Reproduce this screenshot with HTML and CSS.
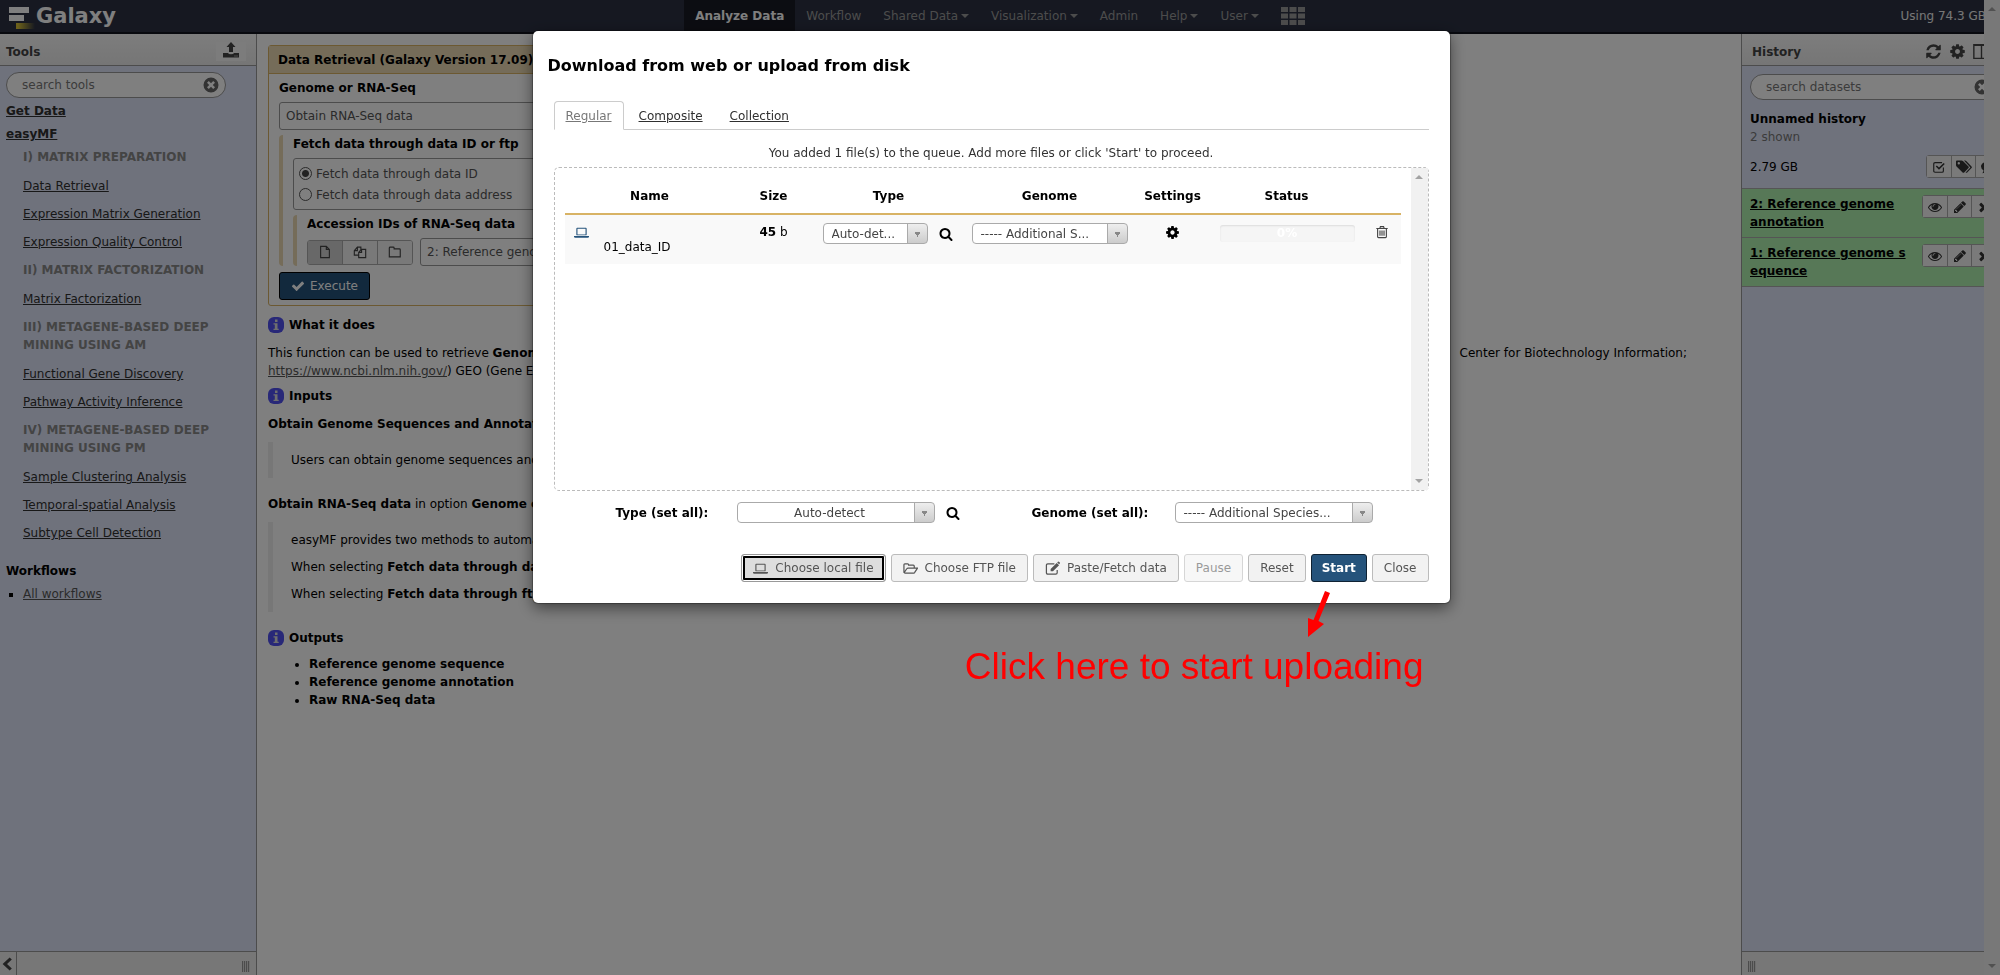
FILE: index.html
```html
<!DOCTYPE html>
<html lang="en">
<head>
<meta charset="utf-8">
<title>Galaxy</title>
<link rel="stylesheet" href="styles.css">
</head>
<body>
<svg class="sprite" aria-hidden="true">
  <symbol id="search" viewBox="0 0 1792 1792"><path d="M1216 832q0-185-131.500-316.500t-316.500-131.500-316.500 131.500-131.500 316.500 131.500 316.500 316.500 131.500 316.500-131.500 131.500-316.500zm512 832q0 52-38 90t-90 38q-54 0-90-38l-343-342q-179 124-399 124-143 0-273.500-55.500t-225-150-150-225-55.500-273.500 55.500-273.500 150-225 225-150 273.500-55.500 273.500 55.500 225 150 150 225 55.500 273.500q0 220-124 399l343 343q37 37 37 90z"/></symbol>
  <symbol id="cog" viewBox="0 0 1792 1792"><path d="M1152 896q0-106-75-181t-181-75-181 75-75 181 75 181 181 75 181-75 75-181zm512-109v222q0 12-8 23t-20 13l-185 28q-19 54-39 91 35 50 107 138 10 12 10 25t-9 23q-27 37-99 108t-94 71q-12 0-26-9l-138-108q-44 23-91 38-16 136-29 186-7 28-36 28h-222q-14 0-24.500-8.500t-11.500-21.500l-28-184q-49-16-90-37l-141 107q-10 9-25 9-14 0-25-11-126-114-165-168-7-10-7-23 0-12 8-23 15-21 51-66.500t54-70.500q-27-50-41-99l-183-27q-13-2-21-12.500t-8-23.500v-222q0-12 8-23t19-13l186-28q14-46 39-92-40-57-107-138-10-12-10-24 0-10 9-23 26-36 98.500-107.500t94.500-71.500q13 0 26 10l138 107q44-23 91-38 16-136 29-186 7-28 36-28h222q14 0 24.500 8.500t11.500 21.500l28 184q49 16 90 37l142-107q9-9 24-9 13 0 25 10 129 119 165 170 7 8 7 22 0 12-8 23-15 21-51 66.500t-54 70.500q26 50 41 98l183 28q13 2 21 12.500t8 23.500z"/></symbol>
  <symbol id="check" viewBox="0 0 1792 1792"><path d="M1671 566q0 40-28 68l-724 724-136 136q-28 28-68 28t-68-28l-136-136-362-362q-28-28-28-68t28-68l136-136q28-28 68-28t68 28l294 295 656-657q28-28 68-28t68 28l136 136q28 28 28 68z"/></symbol>
  <symbol id="times" viewBox="0 0 1792 1792"><path d="M1490 1322q0 40-28 68l-136 136q-28 28-68 28t-68-28l-294-294-294 294q-28 28-68 28t-68-28l-136-136q-28-28-28-68t28-68l294-294-294-294q-28-28-28-68t28-68l136-136q28-28 68-28t68 28l294 294 294-294q28-28 68-28t68 28l136 136q28 28 28 68t-28 68l-294 294 294 294q28 28 28 68z"/></symbol>
  <symbol id="refresh" viewBox="0 0 1792 1792"><path d="M1639 1056q0 5-1 7-64 268-268 434.500t-478 166.500q-146 0-282.500-55t-243.500-157l-129 129q-19 19-45 19t-45-19-19-45v-448q0-26 19-45t45-19h448q26 0 45 19t19 45-19 45l-137 137q71 66 161 102t187 36q134 0 250-65t186-179q11-17 53-117 8-23 30-23h192q13 0 22.500 9.500t9.500 22.500zm25-800v448q0 26-19 45t-45 19h-448q-26 0-45-19t-19-45 19-45l138-138q-148-137-349-137-134 0-250 65t-186 179q-11 17-53 117-8 23-30 23h-199q-13 0-22.500-9.500t-9.500-22.500v-7q65-268 270-434.500t480-166.500q146 0 284 55.500t245 156.500l130-129q19-19 45-19t45 19 19 45z"/></symbol>
  <symbol id="pencil" viewBox="0 0 1792 1792"><path d="M491 1536l91-91-235-235-91 91v107h128v128h107zm523-928q0-22-22-22-10 0-17 7l-542 542q-7 7-7 17 0 22 22 22 10 0 17-7l542-542q7-7 7-17zm-54-192l416 416-832 832h-416v-416zm683 96q0 53-37 90l-166 166-416-416 166-165q36-38 90-38 53 0 91 38l235 234q37 39 37 91z"/></symbol>
  <symbol id="eye" viewBox="0 0 1792 1792"><path d="M1664 960q-152-236-381-353 61 104 61 225 0 185-131.500 316.500t-316.500 131.500-316.500-131.500-131.500-316.500q0-121 61-225-229 117-381 353 133 205 333.500 326.500t434.500 121.500 434.500-121.500 333.500-326.500zm-720-384q0-20-14-34t-34-14q-125 0-214.500 89.500t-89.500 214.500q0 20 14 34t34 14 34-14 14-34q0-86 61-147t147-61q20 0 34-14t14-34zm848 384q0 34-20 69-140 230-376.500 368.500t-499.500 138.500-499.500-139-376.500-368q-20-35-20-69t20-69q140-229 376.500-368t499.500-139 499.500 139 376.500 368q20 35 20 69z"/></symbol>
  <symbol id="upload" viewBox="0 0 16 16"><path d="M8 0l4.500 5H10v5H6V5H3.500zM0 11h5q.5 1.200 3 1.200T11 11h5v4.500H0zm11.500 2.500h1v1h-1zm2 0h1v1h-1z" fill-rule="evenodd"/></symbol>
  <symbol id="times-circle" viewBox="0 0 16 16"><path fill-rule="evenodd" d="M8 .5a7.500 7.500 0 1 0 0 15 7.500 7.500 0 0 0 0-15zM5.800 4L8 6.200 10.200 4 12 5.800 9.800 8l2.200 2.200-1.800 1.800L8 9.800 5.800 12 4 10.200 6.200 8 4 5.800z"/></symbol>
  <symbol id="laptop" viewBox="0 0 16 16"><path fill-rule="evenodd" d="M3.500 3h9q1 0 1 1v6q0 1-1 1h-9q-1 0-1-1V4q0-1 1-1zm.2 1v6h8.600V4zM0 11.700h16v.8q0 1-1.500 1h-13Q0 13.500 0 12.500z"/></symbol>
  <symbol id="file" viewBox="0 0 16 16"><path class="line" d="M3 1.500h6.500L13 5v9.500H3zM9.500 1.500V5H13"/></symbol>
  <symbol id="files" viewBox="0 0 16 16"><path class="line" d="M6.500 11.500h-5V6.500l3.500-4h4v3M1.500 6.500H5v-4M6.500 14.500v-6l3-3.500h5v9.500zM6.500 8.500h3.300V5"/></symbol>
  <symbol id="folder" viewBox="0 0 16 16"><path class="line" d="M1.500 13.500v-10q0-1 1-1h3.500q1 0 1 1v1h6q1 0 1 1v8z"/></symbol>
  <symbol id="folder-open" viewBox="0 0 16 16"><path class="line" d="M1 12.500V4q0-1 1-1h3q1 0 1 1v.5h5q1 0 1 1V7.500M1 12.800l3-4.500q.5-.8 1.500-.8h10l-3.200 4.800q-.5.700-1.300.7H1.500"/></symbol>
  <symbol id="edit" viewBox="0 0 16 16"><path class="line" d="M13 9.500v3q0 1.500-1.500 1.500H3q-1.500 0-1.500-1.500V4.500Q1.500 3 3 3h7"/><path d="M6 8.500L12.500 2l2.500 2.500L8.500 11H6zM13 1.500l.8-.8q.5-.4 1 0l1 1q.4.500 0 1l-.8.8z"/></symbol>
  <symbol id="trash" viewBox="0 0 16 16"><path class="line" d="M1.500 4h13M5.500 4l.7-2.200h3.600L10.500 4M3 4v9.500q0 1 1 1h8q1 0 1-1V4M5.700 6.200v6M8 6.200v6M10.300 6.200v6"/></symbol>
  <symbol id="columns" viewBox="0 0 16 16"><path class="line" d="M.8 1.500h14.400v13H.8zM8 2v12M.8 2.200h14.400"/></symbol>
  <symbol id="check-square" viewBox="0 0 16 16"><path class="line" d="M13 8.500v4q0 1.500-1.500 1.500h-8Q2 14 2 12.500v-8Q2 3 3.500 3h8"/><path d="M4.300 7.500l1.200-1.200L8 8.700l5.300-5.400 1.300 1.300L8 11.200z"/></symbol>
  <symbol id="tags" viewBox="0 0 16 16"><path fill-rule="evenodd" d="M0 2.500Q0 1.500 1 1.500h4.500q1 0 1.700.7l5.300 5.300q.8.800 0 1.600l-4.300 4.300q-.8.800-1.600 0L.8 7.700Q0 7 0 6zM2.800 3a1.200 1.200 0 1 0 0 2.400 1.200 1.200 0 0 0 0-2.400z"/><path d="M8 1.500h1q.8 0 1.500.7l5 5.300q.8.800 0 1.600l-4.300 4.300q-.8.800-1.600.2l4.800-5z"/></symbol>
  <symbol id="comment" viewBox="0 0 16 16"><path d="M8 2c4.500 0 8 2.300 8 5.500S12.500 13 8 13l-1.500-.1Q4.500 15 1.500 15q1.500-1.500 1.300-3.300Q0 10 0 7.500C0 4.300 3.500 2 8 2z"/></symbol>
  <symbol id="chevron-left" viewBox="0 0 16 16"><path d="M11 .5l2.500 2.300L8 8l5.500 5.200L11 15.500 3 8z"/></symbol>
  <symbol id="info" viewBox="0 0 16 16"><rect width="16" height="16" rx="6" fill="#5050f0"/><path fill="#ddd" d="M7 2.500h2.500V5H7zM5.500 6.300h4v5.500h1.200V13H5.500v-1.200h1.300V7.500H5.500z"/></symbol>
</svg>

<div class="app">
  <header class="masthead">
    <a class="brand" href="#">
      <svg class="brand-mark" viewBox="0 0 26 22" aria-hidden="true">
        <defs><linearGradient id="fade"><stop offset=".1" stop-color="#d8c034"/><stop offset="1" stop-color="#d8c034" stop-opacity="0"/></linearGradient></defs>
        <path fill="#fff" d="M0 0h20v6H0zM0 8h15v6H0z"/><path fill="url(#fade)" d="M7 16h19v6H7z"/>
      </svg>
      <span>Galaxy</span>
    </a>
    <nav class="menu">
      <a class="menu-item current" href="#">Analyze Data</a>
      <a class="menu-item" href="#">Workflow</a>
      <a class="menu-item drop" href="#">Shared Data</a>
      <a class="menu-item drop" href="#">Visualization</a>
      <a class="menu-item" href="#">Admin</a>
      <a class="menu-item drop" href="#">Help</a>
      <a class="menu-item drop" href="#">User</a>
      <a class="menu-item" href="#" aria-label="Applications"><svg class="grid-mark" viewBox="0 0 24 18"><path d="M0 0h7v5H0zM8.500 0h7v5h-7zM17 0h7v5h-7zM0 6.500h7v5H0zM8.500 6.500h7v5h-7zM17 6.500h7v5h-7zM0 13h7v5H0zM8.500 13h7v5h-7zM17 13h7v5h-7z"/></svg></a>
    </nav>
    <span class="quota">Using 74.3 GB</span>
  </header>

  <div class="columns">
    <aside class="panel tools">
      <div class="panel-head"><h2>Tools</h2><button class="upload" aria-label="Upload"><svg class="icon i16"><use href="#upload"/></svg></button></div>
      <div class="panel-body tool-body">
        <div class="search tool-search"><input type="text" placeholder="search tools" aria-label="search tools"><svg class="icon i16"><use href="#times-circle"/></svg></div>
        <a class="section" href="#">Get Data</a>
        <a class="section" href="#">easyMF</a>
        <ul class="tool-list">
          <li class="label">I) MATRIX PREPARATION</li>
          <li><a href="#">Data Retrieval</a></li>
          <li><a href="#">Expression Matrix Generation</a></li>
          <li><a href="#">Expression Quality Control</a></li>
          <li class="label">II) MATRIX FACTORIZATION</li>
          <li><a href="#">Matrix Factorization</a></li>
          <li class="label">III) METAGENE-BASED DEEP<br>MINING USING AM</li>
          <li><a href="#">Functional Gene Discovery</a></li>
          <li><a href="#">Pathway Activity Inference</a></li>
          <li class="label">IV) METAGENE-BASED DEEP<br>MINING USING PM</li>
          <li><a href="#">Sample Clustering Analysis</a></li>
          <li><a href="#">Temporal-spatial Analysis</a></li>
          <li><a href="#">Subtype Cell Detection</a></li>
        </ul>
        <h3 class="flows-title">Workflows</h3>
        <ul class="flows"><li><a href="#">All workflows</a></li></ul>
      </div>
      <div class="panel-foot"><button class="collapse" aria-label="Collapse"><svg class="icon i14"><use href="#chevron-left"/></svg></button><span class="grip"></span></div>
    </aside>

    <main class="center">
      <form class="card">
        <h2 class="card-head">Data Retrieval (Galaxy Version 17.09)</h2>
        <div class="card-body">
          <label class="field-name" for="kind">Genome or RNA-Seq</label>
          <select id="kind" class="wide-select"><option>Obtain RNA-Seq data</option></select>
          <div class="nest">
            <strong class="field-name">Fetch data through data ID or ftp</strong>
            <div class="radios">
              <label><input type="radio" name="via" checked>Fetch data through data ID</label>
              <label><input type="radio" name="via">Fetch data through data address</label>
            </div>
            <div class="nest">
              <label class="field-name" for="acc">Accession IDs of RNA-Seq data</label>
              <div class="source">
                <div class="source-buttons">
                  <button type="button" class="on" aria-label="Single dataset"><svg class="icon i14"><use href="#file"/></svg></button>
                  <button type="button" aria-label="Multiple datasets"><svg class="icon i14"><use href="#files"/></svg></button>
                  <button type="button" aria-label="Collection"><svg class="icon i14"><use href="#folder"/></svg></button>
                </div>
                <select id="acc" class="wide-select"><option>2: Reference genome annotation</option></select>
              </div>
            </div>
          </div>
          <button type="button" class="execute"><svg class="icon i14"><use href="#check"/></svg>Execute</button>
        </div>
      </form>

      <section class="help">
        <h3 class="topic"><svg class="icon i16"><use href="#info"/></svg>What it does</h3>
        <div class="about">
          <div class="about-line"><span>This function can be used to retrieve <b>Genome Sequences</b></span><span>Center for Biotechnology Information;</span></div>
          <div><a href="#">https://www.ncbi.nlm.nih.gov/</a>) GEO (Gene Expression Omnibus)</div>
        </div>
        <h3 class="topic"><svg class="icon i16"><use href="#info"/></svg>Inputs</h3>
        <p><b>Obtain Genome Sequences and Annotation</b></p>
        <blockquote><p>Users can obtain genome sequences and annotation</p></blockquote>
        <p><b>Obtain RNA-Seq data</b> in option <b>Genome or RNA-Seq</b></p>
        <blockquote>
          <p>easyMF provides two methods to automatically fetch</p>
          <p>When selecting <b>Fetch data through data ID</b></p>
          <p>When selecting <b>Fetch data through ftp</b></p>
        </blockquote>
        <h3 class="topic"><svg class="icon i16"><use href="#info"/></svg>Outputs</h3>
        <ul class="outputs"><li>Reference genome sequence</li><li>Reference genome annotation</li><li>Raw RNA-Seq data</li></ul>
      </section>
    </main>

    <aside class="panel history">
      <div class="panel-head"><h2>History</h2>
        <div class="head-tools">
          <button aria-label="Refresh"><svg class="icon i17"><use href="#refresh"/></svg></button>
          <button aria-label="Options"><svg class="icon i17"><use href="#cog"/></svg></button>
          <button aria-label="All histories"><svg class="icon i17"><use href="#columns"/></svg></button>
        </div>
      </div>
      <div class="panel-body">
        <div class="history-top">
          <div class="search"><input type="text" placeholder="search datasets" aria-label="search datasets"><svg class="icon i16"><use href="#times-circle"/></svg></div>
          <h3>Unnamed history</h3>
          <div class="shown">2 shown</div>
          <div class="size-row"><span>2.79 GB</span>
            <div class="tri"><button aria-label="Select"><svg class="icon i14"><use href="#check-square"/></svg></button><button aria-label="Tags"><svg class="icon i16"><use href="#tags"/></svg></button><button aria-label="Annotate"><svg class="icon i14"><use href="#comment"/></svg></button></div>
          </div>
        </div>
        <div class="dataset"><a href="#">2: Reference genome annotation</a>
          <div class="tri"><button aria-label="View"><svg class="icon i14"><use href="#eye"/></svg></button><button aria-label="Edit"><svg class="icon i14"><use href="#pencil"/></svg></button><button aria-label="Delete"><svg class="icon i14"><use href="#times"/></svg></button></div>
        </div>
        <div class="dataset"><a href="#">1: Reference genome s<br>equence</a>
          <div class="tri"><button aria-label="View"><svg class="icon i14"><use href="#eye"/></svg></button><button aria-label="Edit"><svg class="icon i14"><use href="#pencil"/></svg></button><button aria-label="Delete"><svg class="icon i14"><use href="#times"/></svg></button></div>
        </div>
      </div>
      <div class="panel-foot"><span class="grip"></span></div>
    </aside>
  </div>
</div>
<div class="rail page-rail"><i class="up"></i><i class="down"></i></div>

<div class="backdrop">
  <div class="dialog-wrap">
    <section class="dialog" role="dialog" aria-labelledby="dialog-title">
      <h1 id="dialog-title">Download from web or upload from disk</h1>
      <div class="dialog-body">
        <nav class="tabs"><a class="active" href="#">Regular</a><a href="#">Composite</a><a href="#">Collection</a></nav>
        <p class="notice">You added 1 file(s) to the queue. Add more files or click 'Start' to proceed.</p>
        <div class="queue">
          <div class="queue-view">
            <table>
              <colgroup><col class="c-icon"><col class="c-name"><col class="c-size"><col class="c-type"><col class="c-genome"><col class="c-set"><col class="c-status"><col class="c-del"></colgroup>
              <thead><tr><th colspan="2">Name</th><th>Size</th><th>Type</th><th>Genome</th><th>Settings</th><th>Status</th><th></th></tr></thead>
              <tbody><tr>
                <td><svg class="icon i15 blue"><use href="#laptop"/></svg></td>
                <td class="name">01_data_ID</td>
                <td><b>45</b> b</td>
                <td><div class="pick"><select class="chooser" aria-label="Type"><option>Auto-det...</option></select><svg class="icon i14"><use href="#search"/></svg></div></td>
                <td><div class="pick"><select class="chooser long" aria-label="Genome"><option>----- Additional S...</option></select></div></td>
                <td><svg class="icon i15"><use href="#cog"/></svg></td>
                <td><div class="progress">0%</div></td>
                <td><svg class="icon i14 dim"><use href="#trash"/></svg></td>
              </tr></tbody>
            </table>
          </div>
          <div class="rail"><i class="up"></i><i class="down"></i></div>
        </div>
        <div class="set-all">
          <label for="all-type">Type (set all):</label>
          <select id="all-type" class="chooser all middle"><option>Auto-detect</option></select>
          <svg class="icon i14"><use href="#search"/></svg>
          <label class="second" for="all-genome">Genome (set all):</label>
          <select id="all-genome" class="chooser all"><option>----- Additional Species...</option></select>
        </div>
        <div class="actions">
          <button class="btn focused"><svg class="icon i15"><use href="#laptop"/></svg>Choose local file</button>
          <button class="btn"><svg class="icon i15"><use href="#folder-open"/></svg>Choose FTP file</button>
          <button class="btn"><svg class="icon i15"><use href="#edit"/></svg>Paste/Fetch data</button>
          <button class="btn" disabled>Pause</button>
          <button class="btn">Reset</button>
          <button class="btn primary">Start</button>
          <button class="btn">Close</button>
        </div>
      </div>
      <div class="callout">
        <svg viewBox="0 0 24 48" aria-hidden="true"><path fill="#f00" d="M19 0l5 2-11.500 28 5.500 3L2 46V27l5.500 2z"/></svg>
        <span>Click here to start uploading</span>
      </div>
    </section>
  </div>
</div>
</body>
</html>
```
FILE: styles.css
```css
* { box-sizing: border-box; }
html, body { height: 100%; }
body {
  margin: 0;
  overflow: hidden;
  font: 12px/18px "DejaVu Sans", Verdana, sans-serif;
  color: #000;
  background: #fff;
}
h1, h2, h3, p, ul, blockquote { margin: 0; padding: 0; }
h1, h2, h3 { font-size: 12px; line-height: 18px; }
button, select, input { font: inherit; color: inherit; margin: 0; }
button { cursor: pointer; }
a { color: #303030; }
.sprite { display: none; }
.icon { fill: currentColor; flex: none; display: block; }
.line { fill: none; stroke: currentColor; stroke-width: 1.3; }
.i14 { width: 14px; height: 14px; }
.i15 { width: 15px; height: 15px; }
.i16 { width: 16px; height: 16px; }
.i17 { width: 17px; height: 17px; }

.app { height: 100%; display: flex; flex-direction: column; }

/* masthead */
.masthead {
  height: 34px;
  flex: none;
  display: grid;
  grid-template-columns: 1fr auto 1fr;
  background: #2c3143;
  border-bottom: 2px solid #10121c;
}
.brand { display: flex; gap: 1px; padding-left: 9px; color: #fff; text-decoration: none; font-size: 21px; font-weight: bold; line-height: 32px; }
.brand-mark { width: 26px; height: 22px; margin-top: 7px; }
.menu { display: flex; }
.menu-item { display: flex; align-items: center; padding: 0 11px; height: 32px; color: #999; text-decoration: none; }
.menu-item.current { background: #181a24; color: #fff; font-weight: bold; }
.drop::after { content: ""; margin-left: 3px; border: 4px solid transparent; border-top-color: currentColor; border-bottom: 0; }
.grid-mark { width: 24px; height: 18px; fill: currentColor; }
.quota { justify-self: end; padding-right: 14px; line-height: 32px; color: #eee; }

/* side panels */
.columns { flex: 1; min-height: 0; display: grid; grid-template-columns: 257px 1fr 259px; }
.panel { display: flex; flex-direction: column; min-height: 0; background: #dfe5f9; }
.tools { border-right: 1px solid #999; }
.history { border-left: 1px solid #999; }
.panel-head {
  height: 32px;
  flex: none;
  display: flex;
  align-items: center;
  justify-content: space-between;
  padding: 4px 10px 0 6px;
  background: linear-gradient(#fafafa, #ececec);
  border-bottom: 1px solid #999;
  color: #444;
}
.panel-head button { border: 0; padding: 0; background: none; color: #444; }
.panel-head .upload { padding: 0 7px 3px; background: #f8f8f8; }
.panel-body { flex: 1; min-height: 0; overflow: hidden; }
.panel-foot { height: 24px; flex: none; display: flex; align-items: center; justify-content: space-between; background: #eee; border-top: 1px solid #999; }
.collapse { width: 17px; height: 100%; padding: 0; border: 0; border-right: 1px solid #999; background: none; color: #444; }
.grip { width: 8px; height: 11px; margin: 5px 6px 0; background: repeating-linear-gradient(90deg, #999 0 1px, #ddd 1px 2px); }
.tool-body { padding: 6px 6px; }
.search { display: flex; align-items: center; border: 1px solid #999; border-radius: 13px; background: #fff; height: 26px; padding: 0 6px 0 15px; color: #666; }
.search input { flex: 1; min-width: 0; border: 0; padding: 0; background: none; outline: 0; }
.search input::placeholder { color: #777; opacity: 1; }
.tool-search { width: 220px; margin-bottom: 4px; }
.section { display: block; font-weight: bold; margin-bottom: 5px; }
.tool-list { list-style: none; padding-left: 17px; }
.tool-list li { margin-bottom: 10px; }
.tool-list .label { font-weight: bold; color: #888; margin-bottom: 11px; }
.flows-title { margin-top: 20px; }
.flows { list-style: square; padding-left: 17px; margin-top: 5px; }
.flows a { color: #555; }

/* tool form */
.center { padding: 11px; overflow: hidden; }
.card { width: 72%; border: 1px solid #d8b365; border-radius: 3px; }
.card-head { padding: 5px 9px 4px; background: #ebd9b2; border-bottom: 1px solid #d8b365; }
.card-body { padding: 5px 10px; }
.field-name { display: block; font-weight: bold; }
.wide-select { width: 100%; height: 28px; border: 1px solid #999; border-radius: 3px; background: #fff; appearance: none; padding: 0 6px; color: #555; }
.card-body > .wide-select { margin-top: 5px; }
.nest { margin-top: 5px; padding-left: 10px; border-left: 4px solid #ebd9b2; border-radius: 4px; }
.card-body > .nest { margin-bottom: 6px; }
.radios { margin-top: 5px; padding: 4px 5px; border: 1px solid #999; border-radius: 3px; color: #555; }
.radios label { display: flex; align-items: center; gap: 4px; height: 21px; }
.radios input { appearance: none; width: 13px; height: 13px; border: 1px solid #555; border-radius: 50%; }
.radios input:checked { background: radial-gradient(#444 0 3px, transparent 4px); }
.source { display: flex; align-items: center; gap: 7px; margin-top: 5px; }
.source-buttons { display: flex; border: 1px solid #aaa; border-radius: 3px; overflow: hidden; }
.source-buttons button { width: 34px; height: 23px; display: grid; place-items: center; padding: 0; border: 0; background: #f2f2f2; color: #444; }
.source-buttons button + button { width: 35px; border-left: 1px solid #aaa; }
.source-buttons .on { background: #d0d0d0; }
.source .wide-select { flex: 1; }
.execute { display: flex; align-items: center; gap: 5px; height: 28px; padding: 0 11px; border: 1px solid #000; border-radius: 3px; background: #25537b; color: #fff; }

/* help */
.topic { display: flex; align-items: center; gap: 5px; }
.help { margin-top: 10px; }
.about { margin: 10px 0 7px; }
.about-line { display: flex; justify-content: space-between; padding-right: 43px; white-space: nowrap; }
.about a { color: #555; }
.help > p { margin-top: 10px; }
blockquote { margin: 9px 0 17px; padding: 9px 18px; border-left: 5px solid #eee; }
blockquote p + p { margin-top: 9px; }
.outputs { margin-top: 8px; padding-left: 41px; font-weight: bold; }

/* history */
.history .panel-head { padding-left: 10px; }
.head-tools { display: flex; gap: 7px; }
.history-top { padding: 8px 0 10px 8px; }
.history-top .search { margin-right: 3px; }
.history-top h3 { margin-top: 10px; }
.shown { color: #777; }
.size-row { display: flex; justify-content: space-between; align-items: center; margin-top: 9px; }
.tri { display: flex; flex: none; border: 1px solid #aaa; border-radius: 3px; }
.tri button { display: grid; place-items: center; width: 24px; height: 21px; padding: 0; border: 0; background: #f4f4f4; color: #333; }
.tri button + button { border-left: 1px solid #aaa; }
.dataset { display: flex; justify-content: space-between; align-items: flex-start; padding: 6px 4px 6px 8px; border-top: 1px solid #aaa; background: #aff1af; }
.dataset:last-child { border-bottom: 1px solid #aaa; }
.dataset a { color: #000; font-weight: bold; }

/* scroll rails */
.rail { width: 17px; background: #f1f1f1; display: flex; flex-direction: column; justify-content: space-between; align-items: center; padding: 7px 0; }
.rail i { border: 4px solid transparent; }
.rail .up { border-bottom-color: #a3a3a3; border-top: 0; }
.rail .down { border-top-color: #a3a3a3; border-bottom: 0; }
.page-rail { position: fixed; top: 0; right: 0; bottom: 0; width: 16px; }

/* upload dialog */
.backdrop { position: fixed; inset: 0; background: rgba(0, 0, 0, .5); }
.dialog-wrap { padding: 31px 18px 0 0; }
.dialog {
  position: relative;
  width: 917px;
  max-width: 100%;
  margin: 0 auto;
  padding: 26px 21px 21px;
  background: #fff;
  border-radius: 5px;
  box-shadow: 0 5px 15px rgba(0, 0, 0, .5), 0 0 1px 1px rgba(0, 0, 0, .3);
}
.dialog h1 { font-size: 16px; margin-left: -6px; }
.dialog-body { margin-top: 26px; }
.tabs { display: flex; border-bottom: 1px solid #ccc; }
.tabs a { padding: 5px 11px 4px; margin-right: 3px; margin-bottom: -1px; border: 1px solid transparent; border-radius: 4px 4px 0 0; }
.tabs .active { color: #777; background: #fff; border-color: #ccc #ccc #fff; }
.notice { margin-top: 14px; text-align: center; color: #333; }
.queue { display: flex; height: 324px; margin-top: 5px; border: 1px dashed #bbb; border-radius: 5px; }
.queue-view { flex: 1; padding: 10px; }
table { width: 100%; border-collapse: collapse; table-layout: fixed; text-align: center; }
.c-icon { width: 33px; } .c-name { width: auto; } .c-size { width: 78px; } .c-type { width: 152px; }
.c-genome { width: 170px; } .c-set { width: 76px; } .c-status { width: 152px; } .c-del { width: 38px; }
th { height: 36px; padding: 0; border-bottom: 2px solid #d8b365; }
td { height: 50px; padding: 8px 0 7px; vertical-align: top; background: #f9f9f9; }
td > .icon { margin: 2px auto; }
.blue { color: #25537b; }
.dim { color: #444; }
td.name { padding: 23px 0 0 6px; text-align: left; }
.pick { display: flex; align-items: center; gap: 11px; padding: 0 10px; }
.pick .long { margin: 0 -3px; width: 156px; }
.chooser {
  appearance: none;
  width: 105px;
  height: 21px;
  padding: 0 20px 0 8px;
  border: 1px solid #aaa;
  border-radius: 4px;
  color: #444;
  background:
    linear-gradient(#888, #888) right 9px top 8px / 1px 5px no-repeat,
    linear-gradient(#888, #888) right 8px top 8px / 3px 3px no-repeat,
    linear-gradient(#888, #888) right 7px top 8px / 5px 2px no-repeat,
    linear-gradient(#aaa, #aaa) right 19px top 0 / 1px 100% no-repeat,
    linear-gradient(#eee, #ccc) right 0 top 0 / 19px 100% no-repeat,
    #fff;
}
.chooser.all { width: 198px; }
.middle { text-align-last: center; }
.progress { height: 17px; margin: 2px 8px 0 9px; border-radius: 3px; background: #f5f5f5; box-shadow: inset 0 1px 2px rgba(0, 0, 0, .1); color: #fff; font-weight: bold; line-height: 16px; }
.set-all { display: flex; align-items: center; margin-top: 11px; padding-left: 62px; }
.set-all label { font-weight: bold; width: 121px; }
.set-all .icon { margin-left: 11px; }
.set-all .second { width: 143px; margin-left: 72px; }
.actions { display: flex; justify-content: flex-end; gap: 5px; margin-top: 31px; }
.btn { display: flex; align-items: center; gap: 7px; height: 28px; padding: 0 11px; border: 1px solid #bbb; border-radius: 3px; background: #f2f2f2; color: #555; }
.btn:disabled { opacity: .6; }
.btn.primary { padding: 0 10px; background: #25537b; border-color: #0f2233; color: #fff; font-weight: bold; }
.btn.focused { background: #ddd; border-color: #999; box-shadow: inset 0 0 0 1px #fff, inset 0 0 0 3px #000; }

/* callout drawn over the page below the dialog */
.callout { position: absolute; right: 26px; top: 560px; color: #f00; font: 37px/42px "Liberation Sans", Arial, sans-serif; white-space: nowrap; }
.callout svg { display: block; width: 24px; height: 48px; margin-left: 341px; }
.callout span { display: block; margin-top: 7px; }
```
